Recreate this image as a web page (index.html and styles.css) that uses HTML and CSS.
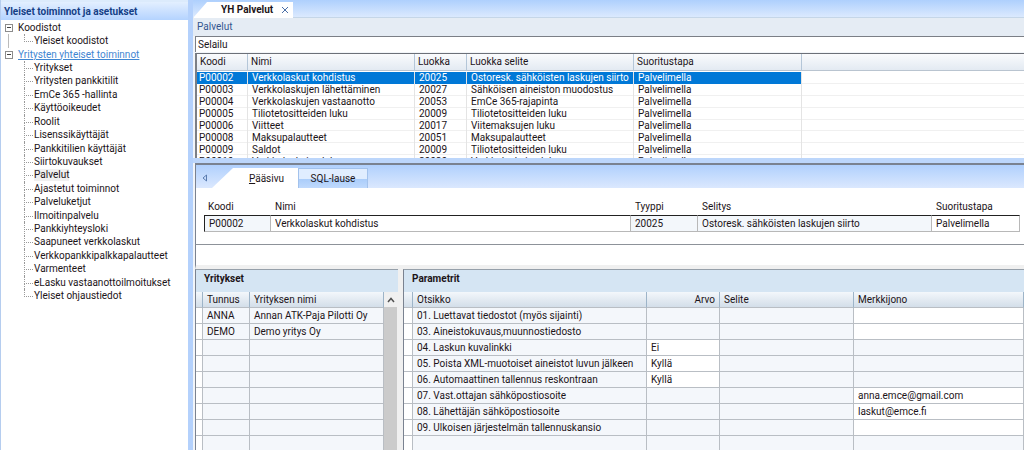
FILE: index.html
```html
<!DOCTYPE html>
<html lang="fi">
<head>
<meta charset="utf-8">
<title>YH Palvelut</title>
<link rel="stylesheet" href="styles.css">
</head>
<body>
<div class="app">
  <nav class="sidebar" aria-labelledby="nav-title">
    <h1 class="sidebar-title" id="nav-title">Yleiset toiminnot ja asetukset</h1>
    <ul class="tree">
      <li class="root"><button class="toggle" aria-label="Sulje Koodistot"></button><a href="#">Koodistot</a></li>
      <li class="leaf last under"><a href="#">Yleiset koodistot</a></li>
      <li class="root"><button class="toggle" aria-label="Sulje Yritysten yhteiset toiminnot"></button><a class="hot" href="#">Yritysten yhteiset toiminnot</a></li>
      <li class="leaf"><a href="#">Yritykset</a></li>
      <li class="leaf"><a href="#">Yritysten pankkitilit</a></li>
      <li class="leaf"><a href="#">EmCe 365 -hallinta</a></li>
      <li class="leaf"><a href="#">Käyttöoikeudet</a></li>
      <li class="leaf"><a href="#">Roolit</a></li>
      <li class="leaf"><a href="#">Lisenssikäyttäjät</a></li>
      <li class="leaf"><a href="#">Pankkitilien käyttäjät</a></li>
      <li class="leaf"><a href="#">Siirtokuvaukset</a></li>
      <li class="leaf"><a class="current" href="#">Palvelut</a></li>
      <li class="leaf"><a href="#">Ajastetut toiminnot</a></li>
      <li class="leaf"><a href="#">Palveluketjut</a></li>
      <li class="leaf"><a href="#">Ilmoitinpalvelu</a></li>
      <li class="leaf"><a href="#">Pankkiyhteysloki</a></li>
      <li class="leaf"><a href="#">Saapuneet verkkolaskut</a></li>
      <li class="leaf"><a href="#">Verkkopankkipalkkapalautteet</a></li>
      <li class="leaf"><a href="#">Varmenteet</a></li>
      <li class="leaf"><a href="#">eLasku vastaanottoilmoitukset</a></li>
      <li class="leaf last"><a href="#">Yleiset ohjaustiedot</a></li>
    </ul>
  </nav>

  <main class="main">
    <div class="window-tabs">
      <div class="window-tab">
        <span>YH Palvelut</span>
        <button class="close" aria-label="Sulje"><svg width="8" height="8" viewBox="0 0 8 8"><path d="M1 1l6 6M7 1L1 7" fill="none" stroke="#4a6fa8"/></svg></button>
      </div>
    </div>
    <h2 class="page-title">Palvelut</h2>
    <input class="mode" type="text" value="Selailu" aria-label="Tila" readonly>

    <section class="browse">
      <table class="list head">
        <colgroup><col class="c-code"><col class="c-name"><col class="c-class"><col class="c-desc"><col class="c-way"><col></colgroup>
        <thead><tr><th>Koodi</th><th>Nimi</th><th>Luokka</th><th>Luokka selite</th><th>Suoritustapa</th><th></th></tr></thead>
      </table>
      <table class="list rows">
        <colgroup><col class="c-code"><col class="c-name"><col class="c-class"><col class="c-desc"><col class="c-way"><col></colgroup>
        <tbody>
          <tr class="selected"><td>P00002</td><td>Verkkolaskut kohdistus</td><td>20025</td><td>Ostoresk. sähköisten laskujen siirto</td><td>Palvelimella</td><td></td></tr>
          <tr><td>P00003</td><td>Verkkolaskujen lähettäminen</td><td>20027</td><td>Sähköisen aineiston muodostus</td><td>Palvelimella</td><td></td></tr>
          <tr><td>P00004</td><td>Verkkolaskujen vastaanotto</td><td>20053</td><td>EmCe 365-rajapinta</td><td>Palvelimella</td><td></td></tr>
          <tr><td>P00005</td><td>Tiliotetositteiden luku</td><td>20009</td><td>Tiliotetositteiden luku</td><td>Palvelimella</td><td></td></tr>
          <tr><td>P00006</td><td>Viitteet</td><td>20017</td><td>Viitemaksujen luku</td><td>Palvelimella</td><td></td></tr>
          <tr><td>P00008</td><td>Maksupalautteet</td><td>20051</td><td>Maksupalautteet</td><td>Palvelimella</td><td></td></tr>
          <tr><td>P00009</td><td>Saldot</td><td>20009</td><td>Tiliotetositteiden luku</td><td>Palvelimella</td><td></td></tr>
          <tr><td>P00010</td><td>Verkkolaskujen luku</td><td>20020</td><td>Verkkolaskujen luku</td><td>Palvelimella</td><td></td></tr>
        </tbody>
      </table>
    </section>

    <section class="detail">
      <div class="page-tabs">
        <button class="scroll-left" aria-label="Edellinen"><svg width="5" height="8" viewBox="0 0 5 8"><path d="M4.500 1v6L1 4z" fill="none" stroke="#5a7cb0"/></svg></button>
        <button class="page-tab active"><span><u>P</u>ääsivu</span></button>
        <button class="page-tab other">SQL-lause</button>
      </div>
      <form class="record">
        <label class="field">Koodi<input class="tinted first" value="P00002" readonly></label>
        <label class="field">Nimi<input value="Verkkolaskut kohdistus"></label>
        <label class="field">Tyyppi<input class="tinted" value="20025" readonly></label>
        <label class="field">Selitys<input class="tinted" value="Ostoresk. sähköisten laskujen siirto" readonly></label>
        <label class="field">Suoritustapa<input value="Palvelimella"></label>
      </form>
      <div class="spacer"></div>
      <div class="panels">
        <section class="panel companies">
          <h3>Yritykset</h3>
          <div class="panel-body">
            <table class="grid">
              <colgroup><col class="c-mark"><col class="c-id"><col></colgroup>
              <thead><tr><th></th><th>Tunnus</th><th>Yrityksen nimi</th></tr></thead>
              <tbody>
                <tr><td></td><td>ANNA</td><td>Annan ATK-Paja Pilotti Oy</td></tr>
                <tr><td></td><td>DEMO</td><td>Demo yritys Oy</td></tr>
                <tr><td></td><td></td><td></td></tr>
                <tr><td></td><td></td><td></td></tr>
                <tr><td></td><td></td><td></td></tr>
                <tr><td></td><td></td><td></td></tr>
                <tr><td></td><td></td><td></td></tr>
                <tr><td></td><td></td><td></td></tr>
                <tr><td></td><td></td><td></td></tr>
              </tbody>
            </table>
            <div class="scrollbar">
              <button class="scroll-up" aria-label="Ylös"><svg width="8" height="6" viewBox="0 0 8 6"><path d="M1 5l3-3.500L7 5" fill="none" stroke="#505050" stroke-width="1.500"/></svg></button>
              <div class="thumb"></div>
            </div>
          </div>
        </section>
        <section class="panel params">
          <h3>Parametrit</h3>
          <table class="grid">
            <colgroup><col class="c-mark-wide"><col class="c-title"><col class="c-value"><col class="c-expl"><col></colgroup>
            <thead><tr><th></th><th>Otsikko</th><th class="right">Arvo</th><th>Selite</th><th>Merkkijono</th></tr></thead>
            <tbody>
              <tr><td></td><td>01. Luettavat tiedostot (myös sijainti)</td><td></td><td></td><td class="edit"></td></tr>
              <tr><td></td><td>03. Aineistokuvaus,muunnostiedosto</td><td></td><td></td><td class="edit"></td></tr>
              <tr><td></td><td>04. Laskun kuvalinkki</td><td class="edit">Ei</td><td></td><td></td></tr>
              <tr><td></td><td>05. Poista XML-muotoiset aineistot luvun jälkeen</td><td class="edit">Kyllä</td><td></td><td></td></tr>
              <tr><td></td><td>06. Automaattinen tallennus reskontraan</td><td class="edit">Kyllä</td><td></td><td></td></tr>
              <tr><td></td><td>07. Vast.ottajan sähköpostiosoite</td><td></td><td></td><td class="edit">anna.emce@gmail.com</td></tr>
              <tr><td></td><td>08. Lähettäjän sähköpostiosoite</td><td></td><td></td><td class="edit">laskut@emce.fi</td></tr>
              <tr><td></td><td>09. Ulkoisen järjestelmän tallennuskansio</td><td></td><td></td><td class="edit"></td></tr>
              <tr><td></td><td></td><td></td><td></td><td></td></tr>
            </tbody>
          </table>
        </section>
      </div>
    </section>
  </main>
</div>
</body>
</html>
```

FILE: styles.css
```css
* { box-sizing: border-box; }
body {
  margin: 0;
  font: 10px/12px Roboto, "Open Sans", sans-serif;
  color: #1c1418;
  background: #fff;
}
h1, h2, h3, ul { margin: 0; padding: 0; }
button, input {
  font: inherit;
  color: inherit;
  margin: 0;
  padding: 0;
  border: 0;
  border-radius: 0;
  background: none;
}
button { display: grid; place-items: center; }
table { border-collapse: separate; border-spacing: 0; table-layout: fixed; width: 100%; }
th, td { text-align: left; font-weight: normal; white-space: nowrap; }

.app { display: flex; height: 100vh; overflow: hidden; }

/* Navigation */
.sidebar {
  flex: none;
  width: 193px;
  border-left: 1px solid #b5cdef;
  border-right: 5px solid #b4d1fc;
}
.sidebar-title {
  height: 20px;
  padding: 3px 3px 0;
  border-top: 2px solid #dcebfc;
  background: linear-gradient(#e3efff, #b4d3ff);
  color: #153f86;
  font-size: 10px;
  line-height: 14px;
  white-space: nowrap;
}
.tree {
  display: flex;
  flex-direction: column;
  height: 283px;
  padding-top: 1px;
  list-style: none;
}
.tree li { flex: 1; display: flex; align-items: center; white-space: nowrap; position: relative; }
.tree a { color: inherit; text-decoration: none; }
.tree .hot { color: #3f86d2; text-decoration: underline; }
.tree .current { background: #f0f0f0; }
.root { padding-left: 4px; gap: 5px; }
.leaf { padding-left: 33px; }
.leaf::before {
  content: "";
  position: absolute;
  left: 23px;
  top: 0;
  width: 8px;
  height: 50%;
  border-left: 1px dotted #999;
  border-bottom: 1px dotted #999;
}
.leaf:not(.last)::after {
  content: "";
  position: absolute;
  left: 23px;
  top: 50%;
  bottom: 0;
  border-left: 1px dotted #999;
}
.under { background: linear-gradient(#bbb, #bbb) 7px 0 / 1px 100% no-repeat; }
.toggle {
  width: 8px;
  height: 8px;
  border: 1px solid #8c8c8c;
  background: linear-gradient(#444, #444) center / 4px 1px no-repeat;
}

/* Main column */
.main { flex: 1; min-width: 0; display: flex; flex-direction: column; background: #f2f5f9; }
.window-tabs { height: 18px; padding-top: 2px; background: linear-gradient(#aed0fd, #dbe9fe); border-bottom: 1px solid #c5d6e8; }
.window-tab {
  display: flex;
  align-items: center;
  justify-content: space-between;
  width: 100px;
  height: 16px;
  padding: 0 4px 0 28px;
  background: #fff;
  clip-path: polygon(14px 0, 100% 0, 100% 100%, 0 100%);
  font-weight: bold;
  white-space: nowrap;
}
.page-title {
  height: 18px;
  padding: 3px 4px;
  background: #e5ecf4;
  color: #33558f;
  font-size: 10px;
  font-weight: normal;
}
.mode {
  height: 16px;
  margin: 0 0 1px 2px;
  padding: 0 2px;
  border-top: 1px solid #7b7f86;
  border-left: 1px solid #7b7f86;
  background: #fff;
}
.browse {
  flex: none;
  height: 105px;
  margin-left: 2px;
  overflow: hidden;
  border-top: 1px solid #6c7078;
  border-left: 2px solid #7b7f86;
  background: #fff;
}
.c-code { width: 51px; }
.c-name { width: 167px; }
.c-class { width: 52px; }
.c-desc { width: 167px; }
.c-way { width: 168px; }
.list th {
  height: 17px;
  padding: 0 3px;
  background: linear-gradient(#fafbfd, #e3eaf2);
  border-right: 1px solid #b4c6d8;
  border-bottom: 1px solid #b9c4d0;
}
.list.head { margin-bottom: 1px; }
.list.rows { height: 95px; }
.list td {
  padding: 1px 2px 0;
  line-height: 10px;
  border-right: 1px solid #e4e4e4;
  box-shadow: inset 0 -1px #f0f0f0;
}
.list td:not(:first-child) { padding-left: 4px; }
.list td:last-child, .list th:last-child { border-right: 0; }
.selected td:not(:last-child) { background: #0078d7; color: #fff; box-shadow: none; }

/* Detail */
.detail {
  flex: 1;
  min-height: 0;
  display: flex;
  flex-direction: column;
  border-top: 5px solid #bcd6fb;
  padding-left: 2px;
}
.page-tabs {
  flex: none;
  display: flex;
  align-items: flex-end;
  height: 25px;
  border-top: 2px solid #7a8290;
  border-left: 1px solid #7a8290;
  background: linear-gradient(#b0d0fd, #dbe8fe);
}
.scroll-left { width: 16px; height: 20px; }
.page-tab { height: 20px; }
.page-tab.active {
  width: 86px;
  padding: 2px 0 0 23px;
  background: #fff;
  clip-path: polygon(21px 0, 100% 0, 100% 100%, 0 100%);
}
.page-tab.other {
  width: 70px;
  border: 1px solid #a3c2ec;
  border-bottom: 0;
  background: linear-gradient(#e0edff 50%, #a9ccfa 50%, #c0dafd);
}
.record {
  flex: none;
  display: grid;
  grid-template-columns: 67px 1fr 67px 234px 88px;
  padding: 13px 4px 12px 8px;
  background: #fff;
  border-left: 1px solid #7a8290;
  border-bottom: 1px solid #8d9299;
}
.field { display: flex; flex-direction: column; gap: 2px; min-width: 0; padding-left: 4px; }
.field input {
  width: calc(100% + 4px);
  height: 17px;
  margin-left: -4px;
  padding: 0 4px 1px;
  border: solid #b8b8b8;
  border-width: 1px 1px 1px 0;
  border-top-color: #222;
  background: #fff;
}
.field input.tinted { background: #f3f7fb; }
.field input.first { border-left: 1px solid #222; }
.spacer { flex: none; height: 24px; background: #fff; border-left: 1px solid #7a8290; border-bottom: 4px solid #f0f0f0; }

.panels { flex: 1; min-height: 0; display: flex; gap: 5px; background: #f0f0f0; }
.panel { border-top: 1px solid #96a0aa; border-left: 1px solid #7a8290; overflow: hidden; background: #f4f7fb; }
.companies { flex: none; width: 203px; }
.params { flex: 1; min-width: 0; }
.panel h3 { height: 22px; padding: 3px 8px; background: #d5e5f3; font-size: 10px; }
.panel-body { display: flex; }
.grid th, .grid td { height: 16px; padding: 1px 4px 0; border-right: 1px solid #b9bec4; border-bottom: 1px solid #b9bec4; }
.grid th { background: linear-gradient(#f3f7fb, #d3dee9); border-right-color: #9db4c8; }
.grid td:first-child { background: #fff; }
.grid td.edit { background: #fff; }
.grid th.right { text-align: right; }
.c-mark { width: 7px; }
.c-id { width: 47px; }
.c-mark-wide { width: 9px; }
.c-title { width: 234px; }
.c-value { width: 73px; }
.c-expl { width: 134px; }
.scrollbar { flex: none; width: 14px; display: flex; flex-direction: column; background: #f0f0f0; }
.scroll-up { height: 15px; }
.thumb { flex: 1; margin-right: 1px; background: #cbcbcb; }
```
